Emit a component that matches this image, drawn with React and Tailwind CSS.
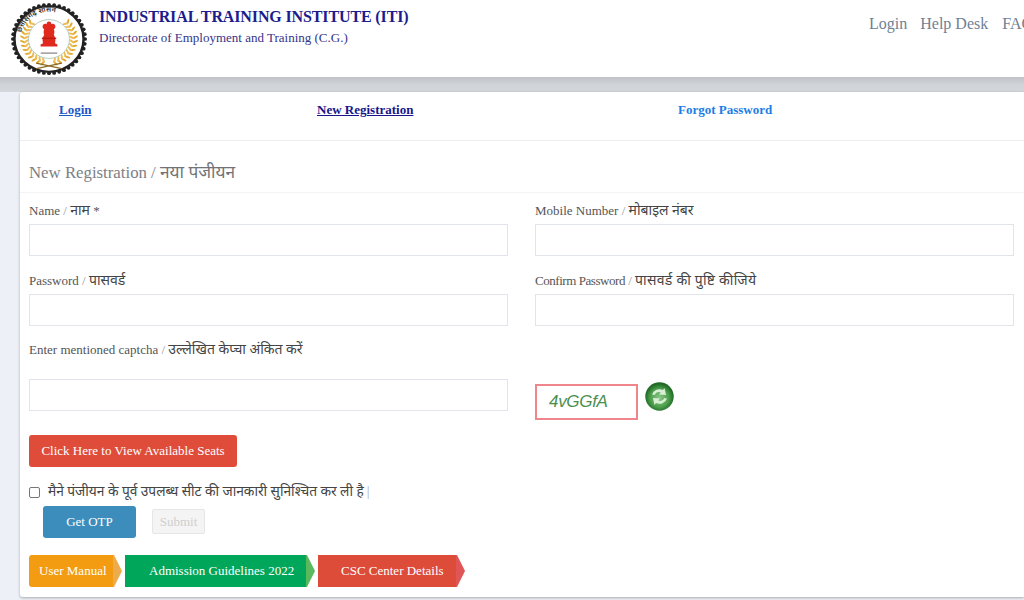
import React from "react";

function Logo() {
  const teeth = [];
  for (let i = 0; i < 44; i++) {
    const a = (i / 44) * Math.PI * 2;
    teeth.push(<circle key={i} cx={40 + 37 * Math.cos(a)} cy={40 + 37 * Math.sin(a)} r="2" fill="#222" />);
  }
  const leaves = [];
  for (let i = 0; i < 13; i++) {
    const deg = 14 + i * 10;
    const a = (deg * Math.PI) / 180;
    for (const [r, tilt, col] of [[27, 28, "#e2a92f"], [23.6, -28, "#eebd55"]]) {
      const xo = r * Math.sin(a);
      const y = 40 + r * Math.cos(a);
      leaves.push(<ellipse key={`l${i}${r}`} cx={40 - xo} cy={y} rx="1.1" ry="3.2" fill={col} transform={`rotate(${deg + tilt} ${40 - xo} ${y})`} />);
      leaves.push(<ellipse key={`r${i}${r}`} cx={40 + xo} cy={y} rx="1.1" ry="3.2" fill={col} transform={`rotate(${-deg - tilt} ${40 + xo} ${y})`} />);
    }
  }
  return (
    <svg width="78" height="74" viewBox="0 0 80 80" preserveAspectRatio="none" className="shrink-0">
      {teeth}
      <circle cx="40" cy="40" r="35.500" fill="#fff" stroke="#222" strokeWidth="2.600" />
      {leaves}
      <circle cx="40" cy="40" r="21" fill="#fff" stroke="#a9c4b6" strokeWidth="0.900" />
      <g transform="translate(40 0) scale(0.82 1) translate(-40 0)">
        <path d="M40 21c2 0 3 1.500 3 3 2-1 5 0 5 2.500 0 1.500-1 2.500-2 3 1 2 1 4 0 6 2 3 2.500 6 1.500 9l3 1.500v2h-21v-2l3-1.500c-1-3-.500-6 1.500-9-1-2-1-4 0-6-1-.500-2-1.500-2-3 0-2.500 3-3.500 5-2.500 0-1.500 1-3 3-3z" fill="#df2a1d" />
        <rect x="31" y="38.500" width="18" height="1.600" fill="#b81c12" />
      </g>
      <rect x="31.500" y="54.500" width="17" height="1.500" fill="#666" opacity="0.700" />
      <path d="M27 72l26-6M53 72l-26-6" stroke="#8a6a20" strokeWidth="1.400" />
      <defs><path id="arc" d="M10.500 40a29.500 29.500 0 0 1 59 0" /></defs>
      <text fontSize="7.400" fontWeight="600" fill="#2a2a2a" fontFamily="'Noto Sans','Liberation Sans',sans-serif"><textPath href="#arc" startOffset="7">छत्तीसगढ़  शासन</textPath></text>
    </svg>
  );
}

function Field({ label, hindi, star, labelClass = "", hindiClass = "" }) {
  return (
    <div className="flex flex-col">
      <div className="h-[32px] flex items-end pb-[4px] text-[13px] leading-[18px] text-[#555]">
        <span>
          <span className={labelClass}>{label}</span> <span className="text-[#999]">/</span> <span className={`text-[14px] text-[#444] ${hindiClass}`}>{hindi}</span>{star ? " *" : ""}
        </span>
      </div>
      <div className="h-[32px] border border-[#e1e4ea] bg-white" />
    </div>
  );
}

function Arrow({ bg, tip, widthClass, pad, label, rounded }) {
  return (
    <div className="flex h-[32px] items-stretch">
      <div className={`flex items-center text-[13px] text-white ${bg} ${widthClass} ${pad} ${rounded ? "rounded-l-[3px]" : ""}`}>{label}</div>
      <svg width="9" height="32" viewBox="0 0 9 32"><polygon points="0,0 1,0 9,16 1,32 0,32" fill={tip} /></svg>
    </div>
  );
}

export default function App() {
  return (
    <div className="w-[1024px] h-[600px] overflow-hidden bg-[#edf1f7] font-['Liberation_Serif','Noto_Sans','Noto_Sans_CJK_SC',serif]">
      <header className="h-[77px] bg-white flex items-start pl-[10px] pt-[2px]">
        <Logo />
        <div className="ml-[11px] pt-[5px] w-[700px]">
          <div className="text-[16px] leading-[20px] font-bold text-[#1c1c8c] tracking-[-0.13px] whitespace-nowrap">INDUSTRIAL TRAINING INSTITUTE (ITI)</div>
          <div className="mt-[2px] text-[13px] leading-[18px] text-[#34348a]">Directorate of Employment and Training (C.G.)</div>
        </div>
        <nav className="flex-1 flex gap-[13px] pt-[12px] pl-[70px] text-[16px] leading-[20px] text-[#6f7f96] whitespace-nowrap overflow-hidden">
          <span>Login</span><span>Help Desk</span><span className="ml-[1px]">FAQ</span>
        </nav>
      </header>
      <div className="h-[15px] bg-gradient-to-b from-[#bfc2c6] via-[#d0d3d8] to-[#d3d6da]" />
      <main className="ml-[20px] h-[505px] bg-white rounded-l-[3px] shadow-[0_1px_3px_rgba(0,0,0,0.3)] flex flex-col">
        <div className="h-[49px] flex-none border-b border-[#eeeeee] flex items-start pt-[9px] text-[13px] leading-[18px] font-bold">
          <a className="ml-[39px] w-[258px] text-[#1a56c4] underline">Login</a>
          <a className="w-[361px] text-[#16168a] underline">New Registration</a>
          <a className="text-[#1c7ee6]">Forgot Password</a>
        </div>
        <div className="h-[52px] flex-none border-b border-[#f4f4f4] pl-[9px] pt-[20px] text-[16.800px] leading-[24px] text-[#7c7f85]">
          New Registration / <span className="text-[17.300px] text-[#707378]">नया पंजीयन</span>
        </div>
        <div className="pl-[9px] pr-[10px]">
          <div className="grid grid-cols-2 gap-x-[27px] gap-y-[6px] -mt-[1px]">
            <Field label="Name" hindi="नाम" star />
            <Field label="Mobile Number" hindi="मोबाइल नंबर" />
            <Field label="Password" hindi="पासवर्ड" />
            <Field label="Confirm Password" hindi="पासवर्ड की पुष्टि कीजिये" labelClass="tracking-[-0.45px]" hindiClass="tracking-[0.3px]" />
          </div>
          <div className="mt-[15px] text-[13px] leading-[18px] text-[#555]">Enter mentioned captcha <span className="text-[#999]">/</span> <span className="text-[14px] text-[#444]">उल्लेखित केप्चा अंकित करें</span></div>
          <div className="grid grid-cols-2 gap-x-[27px] mt-[20px]">
            <div className="h-[32px] border border-[#e1e4ea]" />
            <div className="flex items-start gap-[7px] mt-[5px]">
              <div className="w-[103px] h-[36px] border-2 border-[#f0858c] flex items-center pl-[12px] text-[17px] tracking-[-0.300px] italic text-[#4a8f50] font-['Liberation_Sans',sans-serif]">4vGGfA</div>
              <svg width="29" height="29" viewBox="0 0 29 29" className="-mt-[2px]">
                <defs>
                  <radialGradient id="ball" cx="50%" cy="55%" r="50%">
                    <stop offset="0%" stopColor="#8cc98a" />
                    <stop offset="65%" stopColor="#4c9e4c" />
                    <stop offset="100%" stopColor="#1f6b25" />
                  </radialGradient>
                </defs>
                <circle cx="14.500" cy="14.500" r="14.200" fill="url(#ball)" />
                <path d="M7 12.500a8 8 0 0 1 11-4.500l1.500-2 1.500 7-7-.500 1.800-2a5 5 0 0 0-6.300 2.500z" fill="#d8efd4" />
                <path d="M22 16.500a8 8 0 0 1-11 4.500l-1.500 2-1.500-7 7 .500-1.800 2a5 5 0 0 0 6.300-2.500z" fill="#d8efd4" />
              </svg>
            </div>
          </div>
          <div className="mt-[15px] w-[208px] h-[32px] bg-[#df4c39] rounded-[3px] flex items-center justify-center text-[13px] text-white">Click Here to View Available Seats</div>
          <label className="mt-[15px] flex items-center h-[20px] text-[13.750px] text-[#444]">
            <span className="w-[11px] h-[11px] border border-[#777] rounded-[2px] bg-white mr-[8px] flex-none" />
            मैने पंजीयन के पूर्व उपलब्ध सीट की जानकारी सुनिश्चित कर ली है <span className="ml-[3px] text-[#aab]">|</span>
          </label>
          <div className="flex items-start gap-[16px] pl-[14px] mt-[4px]">
            <div className="w-[93px] h-[32px] bg-[#3c8dbc] rounded-[3px] flex items-center justify-center text-[13px] text-white">Get OTP</div>
            <div className="w-[53px] h-[25px] mt-[3px] bg-[#f4f4f4] border border-[#e6e6e6] rounded-[2px] flex items-center justify-center text-[13px] text-[#cfcfcf]">Submit</div>
          </div>
          <div className="flex items-center gap-[3px] mt-[17px]">
            <Arrow bg="bg-[#f39c12]" tip="#ecac4e" widthClass="w-[84px]" pad="pl-[10px]" label="User Manual" rounded />
            <Arrow bg="bg-[#00a65a]" tip="#5cb85c" widthClass="w-[181px]" pad="pl-[24px]" label="Admission Guidelines 2022" />
            <Arrow bg="bg-[#dd4b39]" tip="#e05555" widthClass="w-[138px]" pad="pl-[23px]" label="CSC Center Details" />
          </div>
        </div>
      </main>
    </div>
  );
}
